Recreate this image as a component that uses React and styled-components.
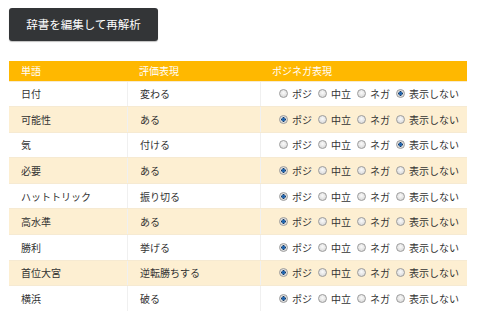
import React from "react";
import styled, { createGlobalStyle } from "styled-components";

const Global = createGlobalStyle`
  html, body { margin: 0; padding: 0; background: #fff; }
  body { font-family: "Noto Sans CJK JP", "Noto Sans", sans-serif; color: #333; }
  * { box-sizing: border-box; }
`;

const Page = styled.div`
  padding: 7.5px 13px 0 9px;
  display: flex;
  flex-direction: column;
  align-items: flex-start;
  gap: 20px;
`;

const Button = styled.button`
  height: 33px;
  width: 149px;
  padding: 0;
  background: #333537;
  color: #fff;
  border: none;
  border-radius: 3px;
  box-shadow: 0 1px 1px rgba(0, 0, 0, 0.25);
  font-family: "Noto Sans CJK JP", sans-serif;
  font-size: 11.5px;
  cursor: pointer;
`;

const Table = styled.div`
  width: 458px;
  display: flex;
  flex-direction: column;
`;

const Row = styled.div`
  display: grid;
  grid-template-columns: 118px 133px 207px;
  height: ${(p) => (p.$head ? "20px" : "25.6px")};
  background: ${(p) => (p.$head ? "#ffb800" : p.$alt ? "#fdefd2" : "#fff")};
  border-top: ${(p) => (p.$head ? "none" : "1px solid #f6ead2")};
  color: ${(p) => (p.$head ? "#fff" : "#333")};
  font-size: 10px;
`;

const Cell = styled.div`
  display: flex;
  align-items: center;
  padding: 0 12px;
  white-space: nowrap;
  border-left: ${(p) => (p.$divider ? `1px solid ${p.$head ? "transparent" : "#f0f0f0"}` : "none")};
`;

const Options = styled.div`
  display: flex;
  align-items: center;
`;

const Option = styled.label`
  display: flex;
  align-items: center;
  margin-left: 6px;
  gap: 4px;
`;

const Radio = styled.input`
  appearance: none;
  margin: 0;
  width: 9px;
  height: 9px;
  border-radius: 50%;
  border: 1px solid #9c9c9c;
  background: radial-gradient(circle at 50% 40%, #fafafa 0%, #e2e2e2 60%, #cfcfcf 100%);
  position: relative;
  &:checked {
    background: radial-gradient(circle, #1c5fa8 0%, #2a6db5 28%, #0f2f55 40%, #e6e6e6 48%, #d0d0d0 100%);
  }
`;

const rows = [
  ["日付", "変わる", 3],
  ["可能性", "ある", 0],
  ["気", "付ける", 3],
  ["必要", "ある", 0],
  ["ハットトリック", "振り切る", 0],
  ["高水準", "ある", 0],
  ["勝利", "挙げる", 0],
  ["首位大宮", "逆転勝ちする", 0],
  ["横浜", "破る", 0],
];

const labels = ["ポジ", "中立", "ネガ", "表示しない"];

export default function App() {
  return (
    <>
      <Global />
      <Page>
        <Button>辞書を編集して再解析</Button>
        <Table>
          <Row $head>
            <Cell $head>単語</Cell>
            <Cell $head>評価表現</Cell>
            <Cell $head>ポジネガ表現</Cell>
          </Row>
          {rows.map(([w, e, sel], i) => (
            <Row key={i} $alt={i % 2 === 1}>
              <Cell>{w}</Cell>
              <Cell $divider>{e}</Cell>
              <Cell $divider>
                <Options>
                  {labels.map((l, j) => (
                    <Option key={j}>
                      <Radio type="radio" name={`r${i}`} defaultChecked={j === sel} />
                      {l}
                    </Option>
                  ))}
                </Options>
              </Cell>
            </Row>
          ))}
        </Table>
      </Page>
    </>
  );
}
